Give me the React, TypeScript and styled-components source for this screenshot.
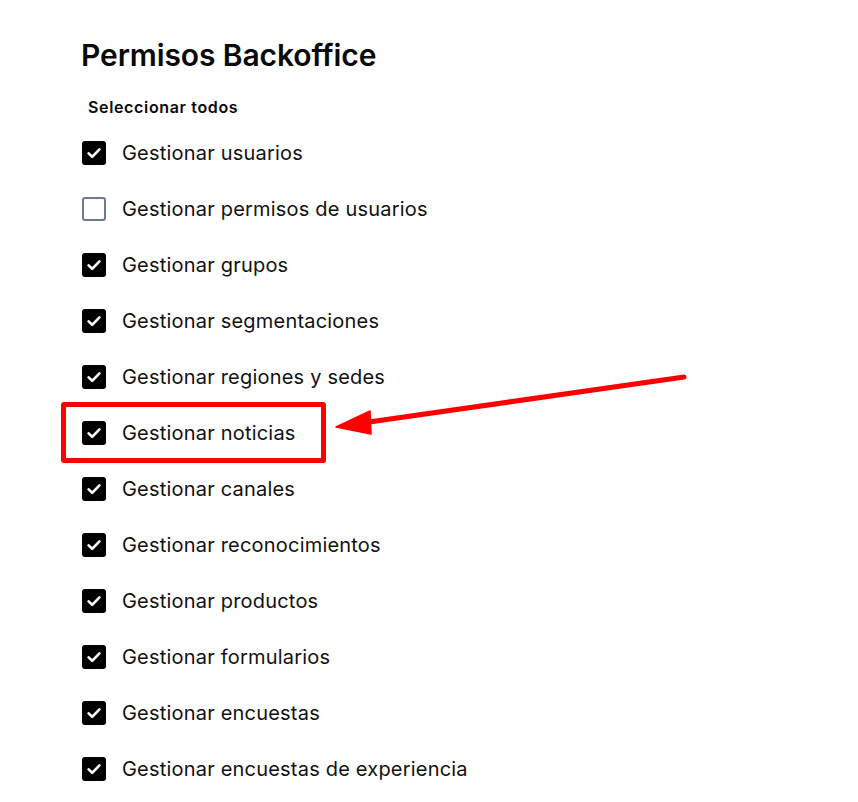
import React from "react";
import styled, { createGlobalStyle } from "styled-components";

const Global = createGlobalStyle`
  html, body { margin: 0; padding: 0; background: #ffffff; }
  body { font-family: Inter, "Noto Sans", Arial, sans-serif; color: #0a0a0a; }
`;

const Page = styled.div`
  position: relative;
  width: 858px;
  height: 802px;
  overflow: hidden;
  box-sizing: border-box;
  padding: 37px 0 0 81px;
  display: flex;
  flex-direction: column;
`;

const Title = styled.h1`
  margin: 0;
  font-size: 30px;
  line-height: 36px;
  font-weight: 600;
  letter-spacing: -0.1px;
`;

const SelectAll = styled.div`
  margin: 24px 0 0 7px;
  font-size: 16px;
  line-height: 20px;
  font-weight: 600;
  letter-spacing: 0.65px;
`;

const List = styled.ul`
  list-style: none;
  margin: 8px 0 0 1px;
  padding: 0;
  display: flex;
  flex-direction: column;
`;

const Row = styled.li`
  height: 56px;
  display: flex;
  align-items: center;
  gap: 16px;
`;

const Box = styled.span<{ $checked: boolean }>`
  width: 24px;
  height: 24px;
  box-sizing: border-box;
  border-radius: 3px;
  display: flex;
  align-items: center;
  justify-content: center;
  background: ${(p) => (p.$checked ? "#000000" : "#ffffff")};
  border: ${(p) => (p.$checked ? "none" : "2px solid #6b7a90")};
  flex-shrink: 0;
`;

const Label = styled.span`
  font-size: 20px;
  line-height: 24px;
  letter-spacing: 0.2px;
  color: #111111;
`;

const Highlight = styled.div`
  position: absolute;
  left: 61px;
  top: 402px;
  width: 265px;
  height: 61px;
  box-sizing: border-box;
  border: 5px solid #ff0000;
  border-radius: 3px;
`;

const Arrow = styled.svg`
  position: absolute;
  left: 0;
  top: 0;
  pointer-events: none;
`;

const items: [string, boolean][] = [
  ["Gestionar usuarios", true],
  ["Gestionar permisos de usuarios", false],
  ["Gestionar grupos", true],
  ["Gestionar segmentaciones", true],
  ["Gestionar regiones y sedes", true],
  ["Gestionar noticias", true],
  ["Gestionar canales", true],
  ["Gestionar reconocimientos", true],
  ["Gestionar productos", true],
  ["Gestionar formularios", true],
  ["Gestionar encuestas", true],
  ["Gestionar encuestas de experiencia", true],
];

const Check = () => (
  <svg width="18" height="18" viewBox="0 0 18 18" fill="none">
    <path d="M3.6 9.4 L7.2 12.8 L14.4 5.4" stroke="#ffffff" strokeWidth="2.6" strokeLinecap="round" strokeLinejoin="round" />
  </svg>
);

export default function App() {
  return (
    <>
      <Global />
      <Page>
        <Title>Permisos Backoffice</Title>
        <SelectAll>Seleccionar todos</SelectAll>
        <List>
          {items.map(([label, checked]) => (
            <Row key={label}>
              <Box $checked={checked}>{checked && <Check />}</Box>
              <Label>{label}</Label>
            </Row>
          ))}
        </List>
        <Highlight />
        <Arrow width="858" height="802" viewBox="0 0 858 802">
          <line x1="684" y1="377" x2="362" y2="423" stroke="#ff0000" strokeWidth="5" strokeLinecap="round" />
          <polygon points="336,427 370,411 371,434" fill="#ff0000" stroke="#ff0000" strokeWidth="1.5" strokeLinejoin="round" />
        </Arrow>
      </Page>
    </>
  );
}
